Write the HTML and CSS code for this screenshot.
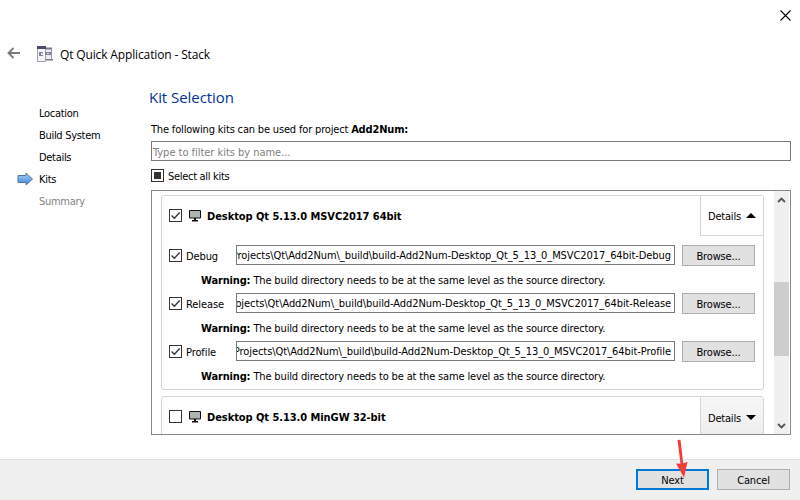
FILE: index.html
```
<!DOCTYPE html>
<html lang="en">
<head>
<meta charset="utf-8">
<title>Qt Quick Application - Stack</title>
<link rel="stylesheet" href="styles.css">
</head>
<body>
<svg class="defs" width="0" height="0">
  <symbol id="monitor" viewBox="0 0 12 12"><path d="M.5.5h11v7.500H.5z" fill="#b2b2b2" stroke="#111"/><path d="M5 8h2v2h2v1.500H3V10h2z" fill="#111"/></symbol>
  <symbol id="check" viewBox="0 0 13 13"><path d="M2.500 6.500l2.800 2.800L10.700 3.500" fill="none" stroke="#333" stroke-width="1.300"/></symbol>
</svg>
<div class="dialog">
  <div class="titlebar"><svg class="close" width="11" height="11" viewBox="0 0 11 11"><path d="M.5.5l10 10M10.500.5l-10 10" stroke="#000" stroke-width="1.100"/></svg></div>
  <header class="header">
    <svg class="back" width="14" height="12" viewBox="0 0 14 12"><path d="M6.500 1L1.500 6l5 5M1.500 6H13" fill="none" stroke="#7a7a7a" stroke-width="1.900"/></svg>
    <svg class="app" width="17" height="17" viewBox="0 0 17 17"><path d="M8.500 2.500h6v11h-6z" fill="#eceef4" stroke="#92949f"/><path d="M8 1.500h7v2H8zM8 13h8v1.500H8z" fill="#777b8c"/><path d="M.5.5h8v15h-8z" fill="#f4f4f6" stroke="#a2a3aa"/><path d="M0 0h9v3H0z" fill="#4b4d66"/><path d="M2 6h4v4H2zM8 6h6v3H8z" fill="#8082a0"/><path d="M4 7h2v2H4zM10 7h2v1h-2z" fill="#d9dce8"/></svg>
    <span class="title">Qt Quick Application - Stack</span>
  </header>
  <div class="body">
    <nav class="steps">
      <div class="step">Location</div><div class="step">Build System</div><div class="step">Details</div>
      <div class="step current"><svg class="arrow" width="17" height="14" viewBox="0 0 17 14"><defs><linearGradient id="blue" x2="0" y2="1"><stop stop-color="#a8d0fa"/><stop offset="1" stop-color="#3f85df"/></linearGradient></defs><path d="M1 3.500h8V1l6.500 6L9 13v-2.500H1z" fill="url(#blue)" stroke="#56749f"/></svg>Kits</div>
      <div class="step later">Summary</div>
    </nav>
    <main class="main">
      <h1>Kit Selection</h1>
      <p class="intro">The following kits can be used for project <b>Add2Num:</b></p>
      <div class="filter"><span>Type to filter kits by name...</span></div>
      <div class="all"><span class="box partial"></span><span class="all-label">Select all kits</span></div>
      <div class="list">
        <div class="cards">
          <section class="card">
            <div class="kit"><span class="box"><svg><use href="#check"/></svg></span><svg class="monitor"><use href="#monitor"/></svg><b class="name">Desktop Qt 5.13.0 MSVC2017 64bit</b><span class="details open">Details<i class="up"></i></span></div>
            <div class="rows">
              <div class="row"><span class="box"><svg><use href="#check"/></svg></span><label>Debug</label><span class="path"><span>Projects\Qt\Add2Num\_build\build-Add2Num-Desktop_Qt_5_13_0_MSVC2017_64bit-Debug</span></span><span class="button">Browse...</span></div>
              <div class="warning"><b>Warning:</b><span>The build directory needs to be at the same level as the source directory.</span></div>
              <div class="row"><span class="box"><svg><use href="#check"/></svg></span><label>Release</label><span class="path"><span>ojects\Qt\Add2Num\_build\build-Add2Num-Desktop_Qt_5_13_0_MSVC2017_64bit-Release</span></span><span class="button">Browse...</span></div>
              <div class="warning"><b>Warning:</b><span>The build directory needs to be at the same level as the source directory.</span></div>
              <div class="row"><span class="box"><svg><use href="#check"/></svg></span><label>Profile</label><span class="path"><span>Projects\Qt\Add2Num\_build\build-Add2Num-Desktop_Qt_5_13_0_MSVC2017_64bit-Profile</span></span><span class="button">Browse...</span></div>
              <div class="warning"><b>Warning:</b><span>The build directory needs to be at the same level as the source directory.</span></div>
            </div>
          </section>
          <section class="card">
            <div class="kit"><span class="box"></span><svg class="monitor"><use href="#monitor"/></svg><b class="name">Desktop Qt 5.13.0 MinGW 32-bit</b><span class="details">Details<i class="down"></i></span></div>
          </section>
        </div>
        <div class="scrollbar">
          <svg width="9" height="6" viewBox="0 0 9 6"><path d="M1 5l3.500-3.500L8 5" fill="none" stroke="#555" stroke-width="1.900"/></svg>
          <div class="thumb"></div>
          <svg class="scroll-down" width="9" height="6" viewBox="0 0 9 6"><path d="M1 1l3.500 3.500L8 1" fill="none" stroke="#555" stroke-width="1.900"/></svg>
        </div>
      </div>
    </main>
  </div>
  <footer class="footer"><span class="button next">Next</span><span class="button">Cancel</span>
    <svg class="pointer" width="14" height="40" viewBox="0 0 14 40"><path d="M2.500 1l3-.3 2.700 23.500 4.300-1.200L9 38.500 1 24.500l4.500.2z" fill="#f33b3b"/></svg>
  </footer>
</div>
</body>
</html>
```
FILE: styles.css
```
* { box-sizing: border-box; }
body { margin: 0; background: #fff; color: #000; font: 11px/16px "DejaVu Sans Condensed", "DejaVu Sans", sans-serif; letter-spacing: -.15px; }
.defs { position: absolute; }
.dialog { width: 800px; height: 500px; overflow: hidden; display: flex; flex-direction: column; white-space: nowrap; }
.titlebar { height: 40px; display: flex; justify-content: flex-end; padding: 10px 9px 0 0; }
.header { height: 42px; display: flex; align-items: flex-start; padding: 6px 0 0 7px; }
.back { margin: 1px 16px 0 0; }
.app { margin-right: 6px; }
.title { font: 12px/18px "Open Sans", "Noto Sans", sans-serif; letter-spacing: -.14px; }
.body { display: flex; height: 377px; }
.steps { width: 149px; padding: 21px 0 0 39px; letter-spacing: -.3px; }
.step { height: 22px; line-height: 22px; }
.current { display: flex; align-items: center; margin-left: -22px; }
.arrow { margin: -2px 5px 0 0; }
.later { color: #838383; }
.main { width: 642px; padding-left: 2px; }
h1 { margin: 4px 0 0 -2px; height: 23px; font: 15px/22px "Open Sans", "Noto Sans", sans-serif; letter-spacing: -.05px; color: #003399; }
.intro { margin: 11px 0 0; height: 21px; line-height: 20px; letter-spacing: -.17px; }
.filter { height: 20px; border: 1px solid #7a7a7a; color: #808080; padding: 0 1px; line-height: 21px; letter-spacing: -.03px; }
.all { height: 29px; display: flex; align-items: center; gap: 4px; }
.all-label { letter-spacing: -.3px; padding-top: 2px; }
.box { flex: none; display: block; width: 13px; height: 13px; border: 1px solid #333; background: #fff; }
.box svg { display: block; width: 13px; height: 13px; margin: -1px; }
.partial { padding: 2px; background: #333 content-box; }
.list { height: 245px; border: 1px solid #828790; display: flex; justify-content: space-between; overflow: hidden; }
.cards { width: 612px; padding: 4px 0 0 9px; }
.card { width: 603px; border: 1px solid #d5d5d5; border-radius: 3px; height: 195px; margin-bottom: 6px; }
.kit { height: 40px; display: flex; align-items: center; padding-left: 7px; }
.kit > .box { margin-top: -1px; }
.monitor { width: 12px; height: 12px; margin: -1px 6px 0 7px; }
.name { letter-spacing: -.06px; padding-top: 1px; }
.details { margin-left: auto; width: 63px; height: 40px; border-left: 1px solid #d5d5d5; display: flex; align-items: center; gap: 5px; padding: 3px 0 0 7px; background: linear-gradient(#f7f7f7, #ededed); letter-spacing: -.2px; }
.open { background: #fff; border-bottom: 1px solid #d5d5d5; }
.up, .down { border: 5px solid transparent; border-top: 0; border-bottom: 5px solid #000; margin-top: -3px; }
.down { border-bottom: 0; border-top: 5px solid #000; }
.rows { padding: 8px 8px 0 7px; }
.row, .warning { height: 24px; display: flex; align-items: center; }
.row .box { margin-top: -1px; }
.row label { width: 50px; margin-left: 4px; padding-top: 1px; letter-spacing: -.1px; }
.path { width: 439px; height: 20px; margin: -2px 7px 0 0; border: 1px solid #7a7a7a; padding: 2px 3px 0 0; display: flex; justify-content: flex-end; align-items: center; overflow: hidden; letter-spacing: -.07px; }
.button { display: block; width: 73px; height: 21px; border: 1px solid #adadad; background: #e1e1e1; text-align: center; line-height: 21px; }
.row .button { margin-top: -1px; }
.warning { padding: 1px 0 0 32px; gap: 3px; }
.scrollbar { width: 15px; margin-right: 1px; background: #f0f0f0; display: flex; flex-direction: column; align-items: center; padding: 6px 0 5px; }
.thumb { width: 15px; height: 74px; background: #cdcdcd; margin-top: 79px; }
.scroll-down { margin-top: auto; }
.footer { position: relative; height: 41px; background: #f0f0f0; border-top: 1px solid #dfdfdf; display: flex; justify-content: flex-end; gap: 8px; padding: 9px 10px 0 0; }
.next { border: 2px solid #0078d7; line-height: 19px; }
.pointer { position: absolute; left: 675px; top: -21px; }
```
